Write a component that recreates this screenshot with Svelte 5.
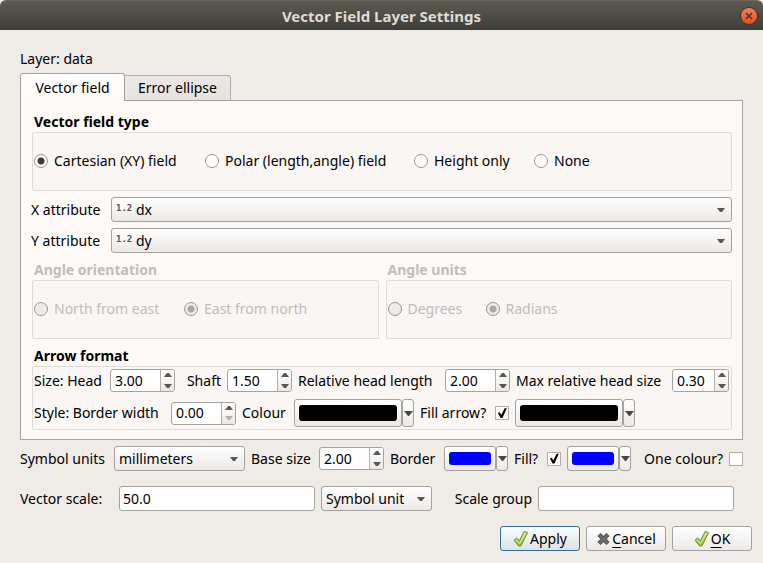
<script>
  let fieldType = $state('cartesian');
  let orientation = $state('north');
  let units = $state('radians');
  let fillArrow = $state(true);
  let fill = $state(true);
  let oneColour = $state(false);

  const fieldTypes = [
    ['cartesian', 'Cartesian (XY) field'],
    ['polar', 'Polar (length,angle) field'],
    ['height', 'Height only'],
    ['none', 'None']
  ];
  const orientations = [
    ['east', 'North from east'],
    ['north', 'East from north']
  ];
  const angleUnits = [
    ['degrees', 'Degrees'],
    ['radians', 'Radians']
  ];
</script>

{#snippet spin(id, value, atMin = false)}
  <span class="spin">
    <input {id} type="number" step="0.1" min="0" {value} />
    <span class="steps">
      <button type="button" aria-label="Increase">
        <svg width="8" height="4" viewBox="0 0 8 4"><path d="M0 4L3 0H5L8 4Z" fill="#5a5856" /></svg>
      </button>
      <button type="button" aria-label="Decrease" disabled={atMin}>
        <svg width="8" height="4" viewBox="0 0 8 4"><path d="M0 0H8L5 4H3Z" fill={atMin ? '#b5b2b0' : '#5a5856'} /></svg>
      </button>
    </span>
  </span>
{/snippet}

{#snippet arrow()}
  <svg class="arrow" width="8" height="4" viewBox="0 0 8 4"><path d="M0 0H8L5 4H3Z" fill="#5a5856" /></svg>
{/snippet}

{#snippet colour(id, kind)}
  <span class="colour {kind}">
    <button type="button" class="pick" {id} aria-label="Choose colour"><i></i></button>
    <button type="button" class="more" aria-label="Colour menu">
      <svg width="9" height="5" viewBox="0 0 9 5"><path d="M0 0H9L5 5H4Z" fill="#4a4846" /></svg>
    </button>
  </span>
{/snippet}

{#snippet tick()}
  <svg width="16" height="18" viewBox="0 0 16 18">
    <defs>
      <linearGradient id="leaf" x1="0" y1="0" x2="0" y2="1">
        <stop offset="0" stop-color="#cfe36c" />
        <stop offset="1" stop-color="#8fbf2c" />
      </linearGradient>
    </defs>
    <path d="M1 10.2L3.6 8L6.4 10.6L11.2 1.4L14.6 2.6L7.8 16H5.6Z" fill="url(#leaf)" stroke="#6f8f35" stroke-width="1" stroke-linejoin="round" />
    <path d="M3 10.2L6.6 13.4L12.4 2.9" fill="none" stroke="#e0ef98" stroke-width="1" />
  </svg>
{/snippet}

<main>
  <header>
    <h1>Vector Field Layer Settings</h1>
    <button type="button" class="close" aria-label="Close">
      <svg width="8" height="8" viewBox="0 0 8 8"><path d="M1 1L7 7M7 1L1 7" stroke="#47302a" stroke-width="1.5" /></svg>
    </button>
  </header>

  <form onsubmit={(e) => e.preventDefault()}>
    <p>Layer: data</p>
    <div class="tabs" role="tablist">
      <button type="button" role="tab" aria-selected="true">Vector field</button>
      <button type="button" role="tab" aria-selected="false">Error ellipse</button>
    </div>

    <section class="panel" role="tabpanel">
      <fieldset>
        <legend>Vector field type</legend>
        <div class="group radios types">
          {#each fieldTypes as [value, text]}
            <label><input type="radio" name="type" {value} bind:group={fieldType} />{text}</label>
          {/each}
        </div>
      </fieldset>

      <div class="attributes">
        <label for="xattr">X attribute</label>
        <div class="select">
          <span class="kind" aria-hidden="true">1.2</span>
          <select id="xattr" class="typed"><option>dx</option></select>
          {@render arrow()}
        </div>
        <label for="yattr">Y attribute</label>
        <div class="select">
          <span class="kind" aria-hidden="true">1.2</span>
          <select id="yattr" class="typed"><option>dy</option></select>
          {@render arrow()}
        </div>
      </div>

      <div class="angles">
        <fieldset disabled>
          <legend>Angle orientation</legend>
          <div class="group radios orientations">
            {#each orientations as [value, text]}
              <label><input type="radio" name="orientation" {value} bind:group={orientation} />{text}</label>
            {/each}
          </div>
        </fieldset>
        <fieldset disabled>
          <legend>Angle units</legend>
          <div class="group radios angle-units">
            {#each angleUnits as [value, text]}
              <label><input type="radio" name="units" {value} bind:group={units} />{text}</label>
            {/each}
          </div>
        </fieldset>
      </div>

      <fieldset>
        <legend>Arrow format</legend>
        <div class="group format">
          <div class="row sizes">
            <label for="head">Size: Head</label>
            {@render spin('head', '3.00')}
            <label for="shaft" class="end">Shaft</label>
            {@render spin('shaft', '1.50')}
            <label for="rel">Relative head length</label>
            {@render spin('rel', '2.00')}
            <label for="max">Max relative head size</label>
            {@render spin('max', '0.30')}
          </div>
          <div class="row styles">
            <label for="bw">Style: Border width</label>
            {@render spin('bw', '0.00', true)}
            <label for="c1">Colour</label>
            {@render colour('c1', 'black')}
            <label for="fa">Fill arrow?</label>
            <input id="fa" type="checkbox" bind:checked={fillArrow} />
            {@render colour('c2', 'black')}
          </div>
        </div>
      </fieldset>
    </section>

    <div class="row symbol">
      <label for="su">Symbol units</label>
      <div class="select">
        <select id="su"><option>millimeters</option></select>
        {@render arrow()}
      </div>
      <label for="bs">Base size</label>
      {@render spin('bs', '2.00')}
      <label for="bc">Border</label>
      {@render colour('bc', 'blue')}
      <label for="fl">Fill?</label>
      <input id="fl" type="checkbox" bind:checked={fill} />
      {@render colour('fc', 'blue')}
      <label for="oc" class="end">One colour?</label>
      <input id="oc" type="checkbox" bind:checked={oneColour} />
    </div>

    <div class="row scale">
      <label for="vs">Vector scale:</label>
      <input id="vs" type="text" value="50.0" />
      <div class="select">
        <select aria-label="Scale unit"><option>Symbol unit</option></select>
        {@render arrow()}
      </div>
      <label for="sg" class="end">Scale group</label>
      <input id="sg" type="text" value="" />
    </div>

    <footer>
      <button type="button" class="default">{@render tick()}Apply</button>
      <button type="button">
        <svg width="15" height="14" viewBox="0 0 15 14"><path d="M3 2.5L12 11.5M12 2.5L3 11.5" stroke="#4d4d4d" stroke-width="4.4" /><path d="M3 2.5L12 11.5M12 2.5L3 11.5" stroke="#6e6e6e" stroke-width="2.4" /></svg>
        <span><u>C</u>ancel</span>
      </button>
      <button type="submit">{@render tick()}<span><u>O</u>K</span></button>
    </footer>
  </form>
</main>

<style>
  :global(body) {
    margin: 0;
    background: #efebe7;
  }
  main, main * {
    box-sizing: border-box;
  }
  main {
    font: 14px/20px "Noto Sans", "Open Sans", sans-serif;
    color: #000;
    background: #efebe7;
    min-height: 100vh;
  }
  button, input, select {
    font: inherit;
    color: inherit;
    margin: 0;
    padding: 0;
  }
  svg {
    display: block;
    flex: none;
  }
  label {
    white-space: nowrap;
  }
  header {
    height: 30px;
    display: flex;
    align-items: center;
    padding: 0 6px 0 22px;
    background: linear-gradient(#5c5a52, #3e3d38);
    border-top: 1px solid #6a675f;
    border-radius: 6px 6px 0 0;
  }
  h1 {
    flex: 1;
    margin: 0;
    text-align: center;
    font-size: 15px;
    line-height: 20px;
    font-weight: 700;
    color: #dfdbd2;
  }
  .close {
    width: 16px;
    height: 16px;
    display: grid;
    place-items: center;
    border: 0;
    border-radius: 50%;
    background: linear-gradient(#f3805b, #e0501c);
    box-shadow: 0 0 0 1px #35342f;
  }
  form {
    padding: 19px 20px 11px;
  }
  p {
    margin: 0;
  }
  .tabs {
    display: flex;
    align-items: flex-end;
    height: 28px;
    margin-top: 3px;
  }
  .tabs button {
    width: 106px;
    height: 25px;
    border: 1px solid #b3afab;
    border-width: 1px 1px 0 0;
    border-radius: 0 3px 0 0;
    background: linear-gradient(#ece8e5, #e6e2df);
  }
  .tabs button[aria-selected="true"] {
    position: relative;
    width: 105px;
    height: 28px;
    margin-bottom: -1px;
    border: 1px solid #a5a2a0;
    border-bottom: 0;
    border-radius: 3px 3px 0 0;
    background: linear-gradient(#fff, #fdf9f6);
  }
  .panel {
    border: 1px solid #a5a2a0;
    background: #fdf9f6;
    padding: 11px 10px 9px 11px;
  }
  fieldset {
    min-width: 0;
    margin: 0;
    padding: 0;
    border: 0;
  }
  legend {
    padding: 0 2px;
    font-weight: 700;
  }
  fieldset:disabled {
    flex: 1;
    color: #bfbdbc;
  }
  .group {
    border: 1px solid #e0dcda;
    border-radius: 2px;
    background: #f9f6f3;
  }
  .radios {
    height: 59px;
    display: grid;
    align-items: center;
    padding: 0 1px 2px;
  }
  .types {
    grid-template-columns: 171px 209px 120px auto;
  }
  .orientations {
    grid-template-columns: 150px auto;
  }
  .angle-units {
    grid-template-columns: 98px auto;
  }
  .radios label {
    display: flex;
    align-items: center;
    gap: 6px;
  }
  input[type="radio"] {
    appearance: none;
    width: 14px;
    height: 14px;
    border: 1px solid #989592;
    border-radius: 50%;
    background: #fff;
  }
  input[type="radio"]:checked {
    background: radial-gradient(circle, #3c3b3a 3px, #fff 4px);
  }
  input[type="radio"]:disabled {
    background: #efebe7;
  }
  input[type="radio"]:checked:disabled {
    background: radial-gradient(circle, #a9a7a5 3px, #efebe7 4px);
  }
  .attributes {
    display: grid;
    grid-template-columns: 74px 1fr;
    align-items: center;
    gap: 6px;
    margin: 6px 0 7px -1px;
  }
  .angles {
    display: flex;
    gap: 7px;
    margin-bottom: 7px;
  }
  .select {
    position: relative;
  }
  select {
    appearance: none;
    display: block;
    width: 100%;
    height: 25px;
    padding: 0 20px 0 4px;
    border: 1px solid #a5a2a0;
    border-radius: 3px;
    background: linear-gradient(#fff, #ebe9e7);
  }
  .typed {
    padding-left: 24px;
  }
  .kind {
    position: absolute;
    left: 5px;
    top: 1px;
    font: 700 9px/20px "DejaVu Sans Mono", monospace;
    color: #555;
    pointer-events: none;
  }
  .arrow {
    position: absolute;
    right: 7px;
    top: 11px;
    pointer-events: none;
  }
  .row {
    display: grid;
    align-items: center;
    gap: 6px;
  }
  .end {
    text-align: right;
  }
  .format {
    padding: 2px 2px 2px 1px;
  }
  .sizes {
    grid-template-columns: 70px 65px 40px 65px 141px 65px 1fr 57px;
  }
  .styles {
    grid-template-columns: 131px 65px 46px 120px 69px 14px 120px;
    margin-top: 7px;
  }
  .spin {
    display: flex;
    height: 23px;
    border: 1px solid #a5a2a0;
    border-radius: 3px;
    background: #fff;
    overflow: hidden;
  }
  .spin input {
    appearance: textfield;
    flex: 1;
    min-width: 0;
    border: 0;
    padding-left: 4px;
    background: none;
  }
  .spin input::-webkit-inner-spin-button {
    appearance: none;
    margin: 0;
  }
  .steps {
    display: flex;
    flex-direction: column;
    width: 14px;
    border-left: 1px solid #b3afab;
    background: linear-gradient(#fff, #ebe9e7);
  }
  .steps button {
    flex: 1;
    display: grid;
    place-items: center;
    border: 0;
    background: none;
  }
  .colour {
    display: flex;
    height: 28px;
  }
  .blue {
    height: 25px;
  }
  .colour button {
    border: 1px solid #a5a2a0;
    border-radius: 3px;
    background: linear-gradient(#fff, #ebe9e7);
  }
  .colour .pick {
    flex: 1;
    padding: 5px 4px;
  }
  .pick i {
    display: block;
    height: 100%;
    border-radius: 3px;
    background: #000;
  }
  .blue i {
    background: #00f;
  }
  .more {
    width: 12px;
    display: grid;
    place-items: center;
  }
  input[type="checkbox"] {
    appearance: none;
    width: 14px;
    height: 14px;
    border: 1px solid #b3afab;
    background: #fff;
  }
  input[type="checkbox"]:checked::before {
    content: "";
    display: block;
    width: 12px;
    height: 12px;
    background: #000;
    clip-path: polygon(16% 50%, 30% 44%, 44% 66%, 72% 10%, 90% 10%, 54% 92%, 38% 92%);
  }
  .symbol {
    grid-template-columns: 88px 131px 62px 65px 48px 64px 27px 14px 64px 1fr 14px;
    margin-top: 6px;
  }
  .scale {
    grid-template-columns: 93px 1fr 111px 94px 1fr;
    margin: 15px 9px 0 0;
  }
  .scale > input {
    width: 100%;
    min-width: 0;
    height: 25px;
    padding: 0 3px;
    border: 1px solid #a5a2a0;
    border-radius: 3px;
    background: #fff;
  }
  footer {
    display: flex;
    justify-content: flex-end;
    gap: 6px;
    margin: 15px -9px 0 0;
  }
  footer button {
    width: 80px;
    height: 25px;
    display: flex;
    align-items: center;
    justify-content: center;
    gap: 1px;
    border: 1px solid #a5a2a0;
    border-radius: 3px;
    background: linear-gradient(#fff, #ebe9e7);
  }
  footer .default {
    border-color: #33708f;
    background: linear-gradient(#fbfcfd, #dce3e8);
  }
  u {
    text-underline-offset: 3px;
  }
</style>
